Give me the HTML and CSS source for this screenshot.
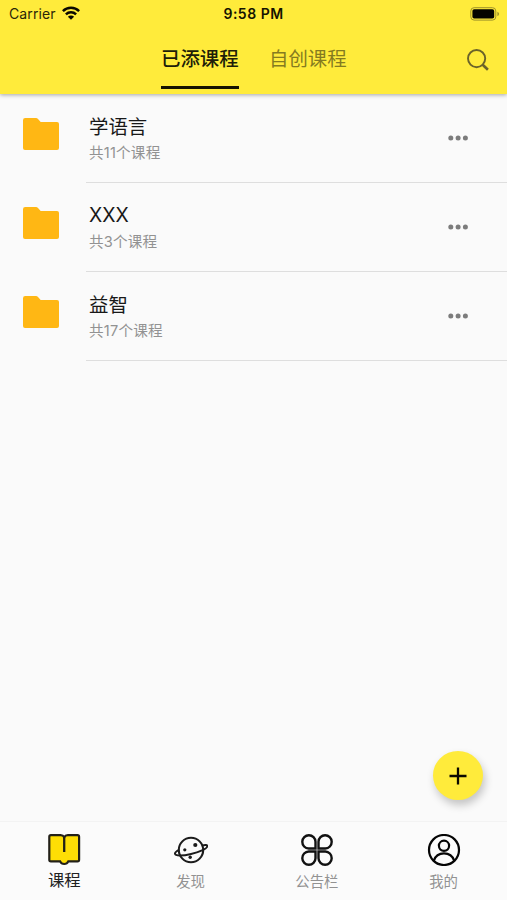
FILE: index.html
```html
<!DOCTYPE html>
<html lang="zh-CN">
<head>
<meta charset="utf-8">
<meta name="viewport" content="width=device-width, initial-scale=1">
<title>课程</title>
<link rel="stylesheet" href="styles.css">
</head>
<body>
<div class="app">
  <header class="header">
    <div class="status">
      <div class="carrier">
        <span>Carrier</span>
        <svg class="wifi" width="18" height="14" viewBox="0 0 18 14"><g fill="none" stroke="#0b0900" stroke-width="2.5"><path d="M.9 5.1a11.6 11.6 0 0 1 16.2 0"/><path d="M3.9 8.3a7.3 7.3 0 0 1 10.2 0"/></g><path d="M9 13.8 5.9 10.7a4.4 4.4 0 0 1 6.2 0z" fill="#0b0900"/></svg>
      </div>
      <span class="time">9:58 PM</span>
      <svg class="battery" width="30" height="14" viewBox="0 0 30 14"><rect x=".8" y=".7" width="25" height="12.4" rx="3.3" fill="none" stroke="#9e922a"/><rect x="2.4" y="2.3" width="21.8" height="9.2" rx="1.8" fill="#050400"/><path d="M27.4 4.7c2.2.8 2.2 3.6 0 4.4z" fill="#9e922a"/></svg>
    </div>
    <div class="bar">
      <nav class="tabs">
        <a class="tab active">已添课程</a>
        <a class="tab">自创课程</a>
      </nav>
      <svg class="search" width="24" height="24" viewBox="0 0 24 24" fill="none" stroke="#6b6329"><circle cx="10.6" cy="10.6" r="8.6" stroke-width="1.9"/><path d="m16.7 16.7 5.2 5.1" stroke-width="2.6"/></svg>
    </div>
  </header>

  <main class="list">
    <div class="row">
      <svg class="folder" width="36" height="32" viewBox="0 0 36 32"><path d="M2.2 0H13q1.2 0 2 .9l2.7 3.2H34q2 0 2 2V30q0 2-2 2H2q-2 0-2-2V2.2Q0 0 2.2 0z" fill="#ffb714"/></svg>
      <div class="body">
        <div class="text"><div class="name">学语言</div><div class="count">共11个课程</div></div>
        <svg class="more" width="20" height="6" viewBox="0 0 20 6" fill="#7c7c7c"><circle cx="2.8" cy="3" r="2.5"/><circle cx="10.1" cy="3" r="2.5"/><circle cx="17.4" cy="3" r="2.5"/></svg>
      </div>
    </div>
    <div class="row">
      <svg class="folder" width="36" height="32" viewBox="0 0 36 32"><path d="M2.2 0H13q1.2 0 2 .9l2.7 3.2H34q2 0 2 2V30q0 2-2 2H2q-2 0-2-2V2.2Q0 0 2.2 0z" fill="#ffb714"/></svg>
      <div class="body">
        <div class="text"><div class="name latin">XXX</div><div class="count">共3个课程</div></div>
        <svg class="more" width="20" height="6" viewBox="0 0 20 6" fill="#7c7c7c"><circle cx="2.8" cy="3" r="2.5"/><circle cx="10.1" cy="3" r="2.5"/><circle cx="17.4" cy="3" r="2.5"/></svg>
      </div>
    </div>
    <div class="row">
      <svg class="folder" width="36" height="32" viewBox="0 0 36 32"><path d="M2.2 0H13q1.2 0 2 .9l2.7 3.2H34q2 0 2 2V30q0 2-2 2H2q-2 0-2-2V2.2Q0 0 2.2 0z" fill="#ffb714"/></svg>
      <div class="body">
        <div class="text"><div class="name">益智</div><div class="count">共17个课程</div></div>
        <svg class="more" width="20" height="6" viewBox="0 0 20 6" fill="#7c7c7c"><circle cx="2.8" cy="3" r="2.5"/><circle cx="10.1" cy="3" r="2.5"/><circle cx="17.4" cy="3" r="2.5"/></svg>
      </div>
    </div>
  </main>

  <button class="fab" aria-label="添加"><svg width="18" height="18" viewBox="0 0 18 18"><path d="M9 .5v17M.5 9h17" stroke="#0b0900" stroke-width="2.3"/></svg></button>

  <nav class="bottom">
    <a class="item active">
      <svg width="34" height="32" viewBox="0 0 34 32"><path d="M3.9 1.2H13.5q2.7 0 3.7 2 1-2 3.7-2h9.6q1.6 0 1.6 1.6v23q0 1.600-1.600 1.600H21.300q-1.200 2.600-4.100 2.600t-4.100-2.600H3.900q-1.600 0-1.600-1.600v-23q0-1.600 1.600-1.600z" fill="#fede05" stroke="#222018" stroke-width="2.2"/><path d="M17.2 3v15" stroke="#222018" stroke-width="2.3"/></svg>
      <span>课程</span>
    </a>
    <a class="item shifted">
      <svg width="34" height="32" viewBox="0 0 34 32" fill="none" stroke="#1c1c1c" stroke-width="2.1"><circle cx="17" cy="16" r="12.2"/><path d="M27.6 11.6c3.8-1 5.5-.8 5.7.4.4 2.8-9 6.4-16.2 8C9 21.9 1.3 22.4 1 19.7c-.2-1.300 1.400-2.600 4.200-3.900" stroke-width="2"/><g fill="#1c1c1c" stroke="none"><circle cx="21.3" cy="11" r="2.1"/><circle cx="10.8" cy="15.8" r="1.6"/><circle cx="16.2" cy="23.3" r="1.7"/></g></svg>
      <span>发现</span>
    </a>
    <a class="item">
      <svg width="34" height="32" viewBox="0 0 34 32" fill="none" stroke="#111" stroke-width="2.4"><path d="M15.5 14.5H8.7a6.6 6.6 0 1 1 6.8-6.7zM18.5 14.5h6.8a6.6 6.6 0 1 0-6.8-6.7zM15.5 17.5H8.7a6.6 6.6 0 1 0 6.8 6.7zM18.5 17.5h6.8a6.6 6.6 0 1 1-6.8 6.7z"/></svg>
      <span>公告栏</span>
    </a>
    <a class="item">
      <svg width="34" height="32" viewBox="0 0 34 32" fill="none" stroke="#050505" stroke-width="2.2"><circle cx="17" cy="16" r="15"/><circle cx="17" cy="11.8" r="5.1"/><path d="M6.8 26.6C8.5 21.5 12.3 19.3 17 19.3s8.5 2.200 10.200 7.300"/></svg>
      <span>我的</span>
    </a>
  </nav>
</div>
</body>
</html>
```

FILE: styles.css
```css
* { box-sizing: border-box; }
body {
  margin: 0;
  background: #fafafa;
  font-family: "Noto Sans CJK SC", "Noto Sans", sans-serif;
}
.app {
  position: relative;
  display: flex;
  flex-direction: column;
  height: 900px;
  overflow: hidden;
}
.header {
  flex: none;
  height: 94px;
  background: #ffeb3b;
  box-shadow: 0 1px 4px rgba(0, 0, 0, .34);
}
.status {
  display: grid;
  grid-template-columns: 1fr auto 1fr;
  align-items: center;
  height: 27px;
  padding: 0 7px 0 9px;
  font-family: Inter, "Liberation Sans", sans-serif;
  font-size: 14px;
  color: #2a2608;
}
.carrier { display: flex; align-items: center; gap: 6px; letter-spacing: .12px; }
.wifi { display: block; margin-top: -2px; }
.time { margin-right: 2px; font-weight: 600; letter-spacing: .5px; color: #151300; }
.battery { justify-self: end; }
.bar {
  display: grid;
  grid-template-columns: 1fr auto 1fr;
  height: 62px;
}
.tabs { display: flex; grid-column: 2; gap: 30px; margin-left: 1px; }
.tab {
  width: 78px;
  height: 62px;
  padding-top: 17px;
  font-size: 19.4px;
  line-height: 28px;
  white-space: nowrap;
  color: #857b20;
}
.tab.active { border-bottom: 3px solid #151300; font-weight: 500; color: #201d08; }
.search { justify-self: end; margin: 21px 17px 0 0; }

.list { flex: 1; }
.row { display: flex; height: 89px; }
.folder { flex: none; margin: 24px 27px 0 23px; }
.body {
  flex: 1;
  display: flex;
  align-items: flex-start;
  justify-content: space-between;
  padding: 18px 39px 0 3px;
  border-bottom: 1px solid #dedede;
}
.name { font-size: 19.4px; line-height: 28px; color: #181818; }
.name.latin { font-family: Inter, sans-serif; }
.count {
  margin-top: 2px;
  font-family: Inter, "Noto Sans CJK SC", sans-serif;
  font-size: 14.6px;
  line-height: 22px;
  letter-spacing: .2px;
  color: #929292;
}
.more { margin-top: 23px; }

.fab {
  position: absolute;
  left: 433px;
  top: 751px;
  display: flex;
  align-items: center;
  justify-content: center;
  width: 50px;
  height: 49px;
  padding: 0;
  border: 0;
  border-radius: 50%;
  background: #ffeb3b;
  box-shadow: 2px 5px 9px rgba(0, 0, 0, .22);
}
.bottom {
  display: grid;
  grid-template-columns: repeat(4, 1fr);
  flex: none;
  height: 79px;
  border-top: 1px solid #f3f3f3;
  background: #fbfbfb;
}
.item {
  display: flex;
  flex-direction: column;
  align-items: center;
  padding-top: 12px;
  font-size: 14.4px;
  line-height: 20px;
  color: #929292;
}
.item span { margin-top: 5px; }
.item.active { padding-left: 2px; font-size: 16.4px; color: #222; }
.item.active span { margin-top: 3px; }
.item.shifted { padding-left: 1px; }
```
